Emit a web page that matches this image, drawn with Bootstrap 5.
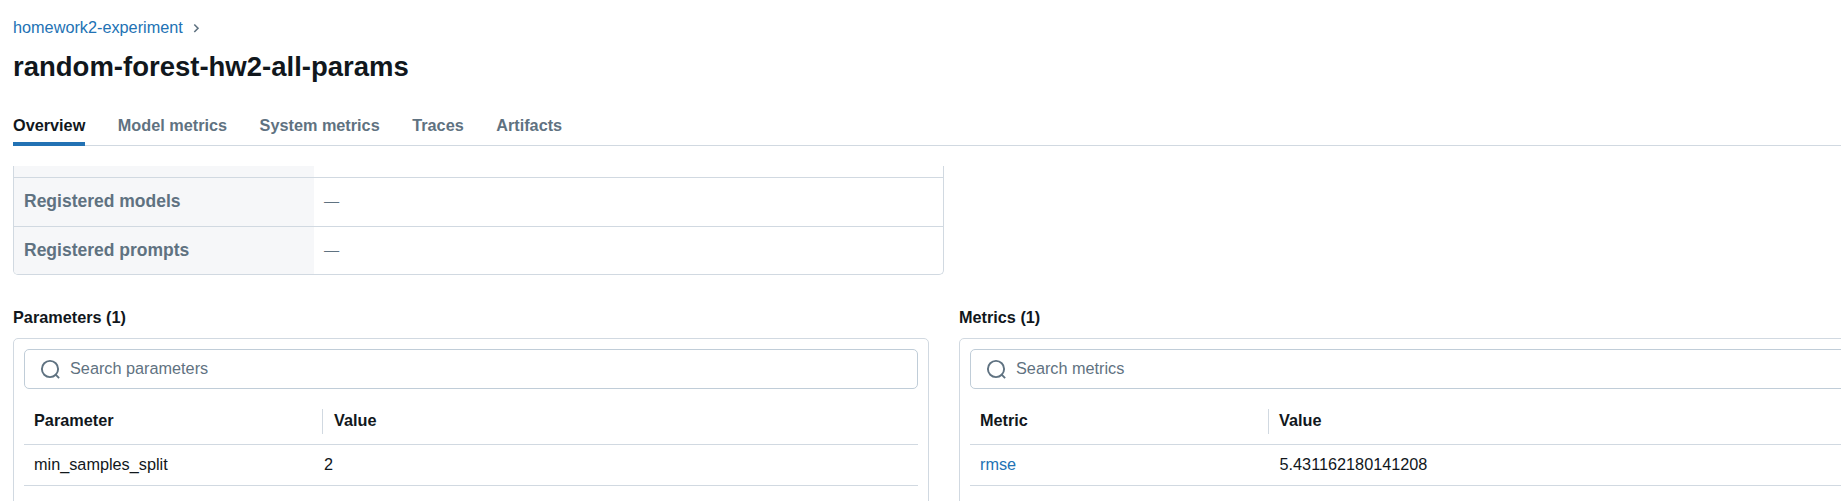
<!DOCTYPE html>
<html lang="en">
<head>
<meta charset="utf-8">
<title>random-forest-hw2-all-params</title>
<link rel="stylesheet" href="https://cdn.jsdelivr.net/npm/bootstrap@5.3.0/dist/css/bootstrap.min.css">
<style>
:root{--line:#d1d9e1;--field:#c0cdd8;--ink:#11171c;--muted-ink:#5f7281;--accent:#2272b4}
body{font-family:"Liberation Sans",Arial,sans-serif;font-size:16.25px;line-height:25px;color:var(--ink);background:#fff;height:501px;overflow:hidden}
a{color:var(--accent)}
.page{padding:15px 0 0 13px;height:501px}
.run-title{font-size:27.5px;line-height:35px;font-weight:700;margin:9px 0 0}
.tabs{margin-top:29px;height:33px;gap:32.5px;box-shadow:inset 0 -1px var(--line)}
.tabs .nav-link{padding:0;font-weight:700;color:var(--muted-ink);height:33px}
.tabs .nav-link.active{color:var(--ink);box-shadow:inset 0 -4px var(--accent)}
.scroller{margin-top:20px}
.details{width:931px;border:1px solid var(--line);border-top:0;border-radius:0 0 5px 5px;overflow:hidden;font-size:17.5px}
.details .line-row{height:49px;border-top:1px solid var(--line)}
.details .line-row:first-child{height:11px;border-top:0}
.details .line-row:last-child{height:48px}
.details .key{width:300px;background:#f6f7f9;color:var(--muted-ink);font-weight:700;padding:0 10px 1px}
.details .val{color:var(--muted-ink);padding:0 0 3px 10px;font-size:15.2px}
.panels{margin-top:30px;gap:30px}
.panel{width:916px}
.panel-title{font-size:16.25px;line-height:25px;font-weight:700;margin:0 0 8px}
.panel-box{border:1px solid var(--line);border-radius:5px;padding:10px;height:300px}
.search{height:40px;border:1px solid var(--field);border-radius:5px;padding:0 15px;gap:10px;color:var(--muted-ink)}
.search svg{width:20px;height:20px}
.search span{padding-bottom:2px}
.trow{border-bottom:1px solid var(--line);height:41px;padding:0 0 1px 10px}
.trow.head{height:56px;font-weight:700;padding-top:10px;padding-bottom:0;line-height:23px}
.trow.head>div{height:25px}
.trow .name{width:290px}
.trow .sep{width:289px;border-right:1px solid var(--line);margin-right:11px}
.metrics .trow .name{width:299.5px}
.metrics .trow .sep{margin-right:10px}
</style>
</head>
<body>
<main class="page d-flex flex-column">
  <nav class="d-flex align-items-center flex-shrink-0">
    <a href="#" class="text-decoration-none">homework2-experiment</a>
    <svg class="ms-2" width="10" height="12" viewBox="0 0 10 12" fill="none" stroke="#5f7281" stroke-width="1.6"><path d="M3.3 2.5 7 6.3 3.3 10"/></svg>
  </nav>
  <h1 class="run-title">random-forest-hw2-all-params</h1>
  <div class="nav tabs flex-nowrap flex-shrink-0">
    <a href="#" class="nav-link active">Overview</a>
    <a href="#" class="nav-link">Model metrics</a>
    <a href="#" class="nav-link">System metrics</a>
    <a href="#" class="nav-link">Traces</a>
    <a href="#" class="nav-link">Artifacts</a>
  </div>
  <div class="scroller flex-grow-1 overflow-hidden">
    <div class="details">
      <div class="d-flex line-row"><div class="key"></div><div class="val"></div></div>
      <div class="d-flex line-row"><div class="key d-flex align-items-center">Registered models</div><div class="val d-flex align-items-center">—</div></div>
      <div class="d-flex line-row"><div class="key d-flex align-items-center">Registered prompts</div><div class="val d-flex align-items-center">—</div></div>
    </div>
    <div class="panels d-flex">
      <section class="panel flex-shrink-0">
        <h2 class="panel-title">Parameters (1)</h2>
        <div class="panel-box">
          <div class="search d-flex align-items-center">
            <svg viewBox="0 0 20 20" fill="none" stroke="#5f7281" stroke-width="1.9"><circle cx="10" cy="10" r="8.1"/><path d="m15.2 15.2 3.9 3.9"/></svg>
            <span>Search parameters</span>
          </div>
          <div class="trow head d-flex align-items-center"><div class="sep">Parameter</div><div>Value</div></div>
          <div class="trow d-flex align-items-center"><div class="name">min_samples_split</div><div>2</div></div>
        </div>
      </section>
      <section class="panel metrics flex-shrink-0">
        <h2 class="panel-title">Metrics (1)</h2>
        <div class="panel-box">
          <div class="search d-flex align-items-center">
            <svg viewBox="0 0 20 20" fill="none" stroke="#5f7281" stroke-width="1.9"><circle cx="10" cy="10" r="8.1"/><path d="m15.2 15.2 3.9 3.9"/></svg>
            <span>Search metrics</span>
          </div>
          <div class="trow head d-flex align-items-center"><div class="sep">Metric</div><div>Value</div></div>
          <div class="trow d-flex align-items-center"><div class="name"><a href="#" class="text-decoration-none">rmse</a></div><div>5.431162180141208</div></div>
        </div>
      </section>
    </div>
  </div>
</main>
<script src="https://cdn.jsdelivr.net/npm/bootstrap@5.3.0/dist/js/bootstrap.bundle.min.js"></script>
</body>
</html>
